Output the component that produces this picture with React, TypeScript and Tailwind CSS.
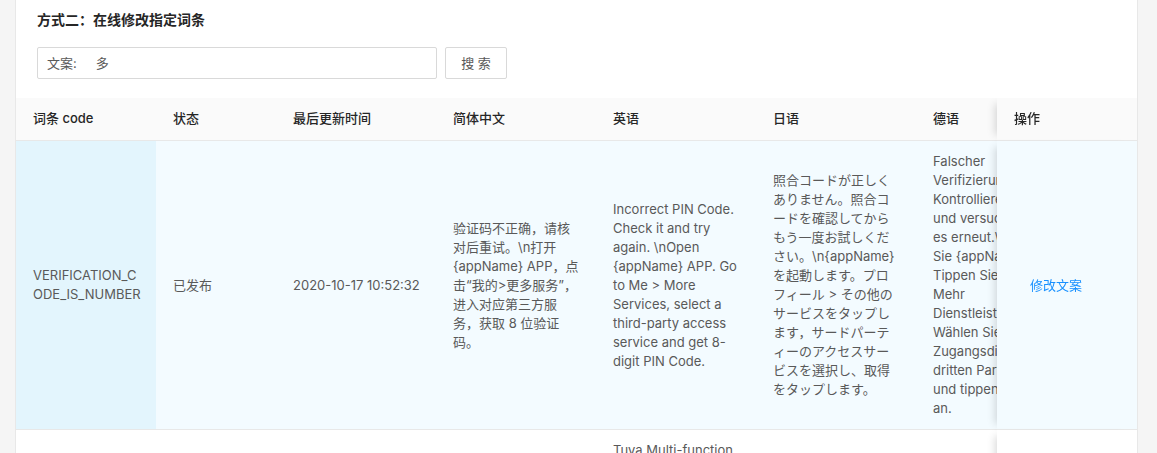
import React from 'react';

type Row = {
  code: string[];
  status: string;
  time: string;
  zh: string[];
  en: string[];
  ja: string[];
  de: string[];
  active?: boolean;
};

const rows: Row[] = [
  {
    code: ['VERIFICATION_C', 'ODE_IS_NUMBER'],
    status: '已发布',
    time: '2020-10-17 10:52:32',
    zh: [
      '验证码不正确，请核',
      '对后重试。\\n打开',
      '{appName} APP，点',
      '击“我的>更多服务”，',
      '进入对应第三方服',
      '务，获取 8 位验证',
      '码。',
    ],
    en: [
      'Incorrect PIN Code.',
      'Check it and try',
      'again. \\nOpen',
      '{appName} APP. Go',
      'to Me > More',
      'Services, select a',
      'third-party access',
      'service and get 8-',
      'digit PIN Code.',
    ],
    ja: [
      '照合コードが正しく',
      'ありません。照合コ',
      'ードを確認してから',
      'もう一度お試しくだ',
      'さい。\\n{appName}',
      'を起動します。プロ',
      'フィール > その他の',
      'サービスをタップし',
      'ます，サードパーテ',
      'ィーのアクセスサー',
      'ビスを選択し、取得',
      'をタップします。',
    ],
    de: [
      'Falscher',
      'Verifizierungscode.',
      'Kontrollieren Sie ihn',
      'und versuchen Sie',
      'es erneut.\\nÖffnen',
      'Sie {appName} APP.',
      'Tippen Sie auf Ich >',
      'Mehr',
      'Dienstleistungen.',
      'Wählen Sie den',
      'Zugangsdienst eines',
      'dritten Partners aus',
      'und tippen Sie auf',
      'an.',
    ],
    active: true,
  },
  {
    code: ['MULTI_FUNCTIO', 'N_GATEWAY_TIP'],
    status: '已发布',
    time: '2020-10-17 10:52:32',
    zh: ['涂鸦多功能网关，', '支持 Zigbee 与蓝牙', '子设备接入。'],
    en: [
      'Tuya Multi-function',
      'Gateway supports',
      'Zigbee and',
      'Bluetooth sub-',
      'devices. Add the',
      'gateway first, then',
      'add sub-devices',
      'from the gateway',
      'page in {appName}',
      'APP.',
    ],
    ja: ['Tuya 多機能ゲート', 'ウェイは Zigbee と', 'Bluetooth に対応し', 'ています。'],
    de: ['Tuya Multifunktions-', 'Gateway unterstützt', 'Zigbee und', 'Bluetooth.'],
  },
];

function Lines({ lines }: { lines: string[] }) {
  return (
    <>
      {lines.map((l, i) => (
        <div key={i} className="whitespace-nowrap">
          {l}
        </div>
      ))}
    </>
  );
}

const th = 'pl-[17px] pr-[15px] pt-[11px] pb-[12px] text-left font-medium text-[#262626] bg-[#fafafa] border-b border-[#e8e8e8]';
const td = 'pl-[17px] pr-[15px] py-[11px] align-middle border-b border-[#e8e8e8]';
const fixedShadow = 'sticky right-0 z-10 shadow-[-8px_0_8px_-6px_rgba(0,0,0,0.15)]';

export default function App() {
  return (
    <div className="min-h-screen bg-[#f5f5f5] font-['Inter','Noto_Sans_CJK_SC',sans-serif] text-[13px] leading-[19px] text-[#595959]">
      <div className="ml-[15px] w-[1123px] border-x border-[#e8e8e8] bg-white pt-[10px]">
        <h2 className="pl-[21px] text-[14px] font-semibold text-[#262626]">方式二：在线修改指定词条</h2>

        <div className="mt-[18px] flex items-center gap-2 px-[21px]">
          <div className="flex h-[32px] w-[400px] items-center rounded-[2px] border border-[#d9d9d9] px-[9px]">
            <span className="mr-[19px]">文案:</span>
            <span>多</span>
          </div>
          <button className="h-[32px] w-[62px] rounded-[2px] border border-[#d9d9d9] bg-white text-[#595959]">
            搜 索
          </button>
        </div>

        <div className="mt-[19px] w-full overflow-hidden">
          <table className="w-[1200px] table-fixed border-separate border-spacing-0">
            <colgroup>
              <col className="w-[140px]" />
              <col className="w-[120px]" />
              <col className="w-[160px]" />
              <col className="w-[160px]" />
              <col className="w-[160px]" />
              <col className="w-[160px]" />
              <col className="w-[160px]" />
              <col className="w-[140px]" />
            </colgroup>
            <thead>
              <tr>
                <th className={th}>词条 code</th>
                <th className={th}>状态</th>
                <th className={th}>最后更新时间</th>
                <th className={th}>简体中文</th>
                <th className={th}>英语</th>
                <th className={th}>日语</th>
                <th className={th}>德语</th>
                <th className={`${th} ${fixedShadow}`}>操作</th>
              </tr>
            </thead>
            <tbody>
              {rows.map((r, i) => {
                const bg = r.active ? 'bg-[#f3fbff]' : 'bg-white';
                return (
                  <tr key={i}>
                    <td className={`${td} ${r.active ? 'bg-[#e3f5fd]' : 'bg-white'}`}>
                      <Lines lines={r.code} />
                    </td>
                    <td className={`${td} ${bg}`}>{r.status}</td>
                    <td className={`${td} ${bg} whitespace-nowrap`}>{r.time}</td>
                    <td className={`${td} ${bg}`}>
                      <Lines lines={r.zh} />
                    </td>
                    <td className={`${td} ${bg}`}>
                      <Lines lines={r.en} />
                    </td>
                    <td className={`${td} ${bg} font-['Inter','Noto_Sans_CJK_JP',sans-serif]`}>
                      <Lines lines={r.ja} />
                    </td>
                    <td className={`${td} ${bg} overflow-hidden`}>
                      <Lines lines={r.de} />
                    </td>
                    <td className={`${td} ${bg} ${fixedShadow}`}>
                      <a href="#" className="ml-[16px] whitespace-nowrap text-[#1890ff]">
                        修改文案
                      </a>
                    </td>
                  </tr>
                );
              })}
            </tbody>
          </table>
        </div>
      </div>
    </div>
  );
}
